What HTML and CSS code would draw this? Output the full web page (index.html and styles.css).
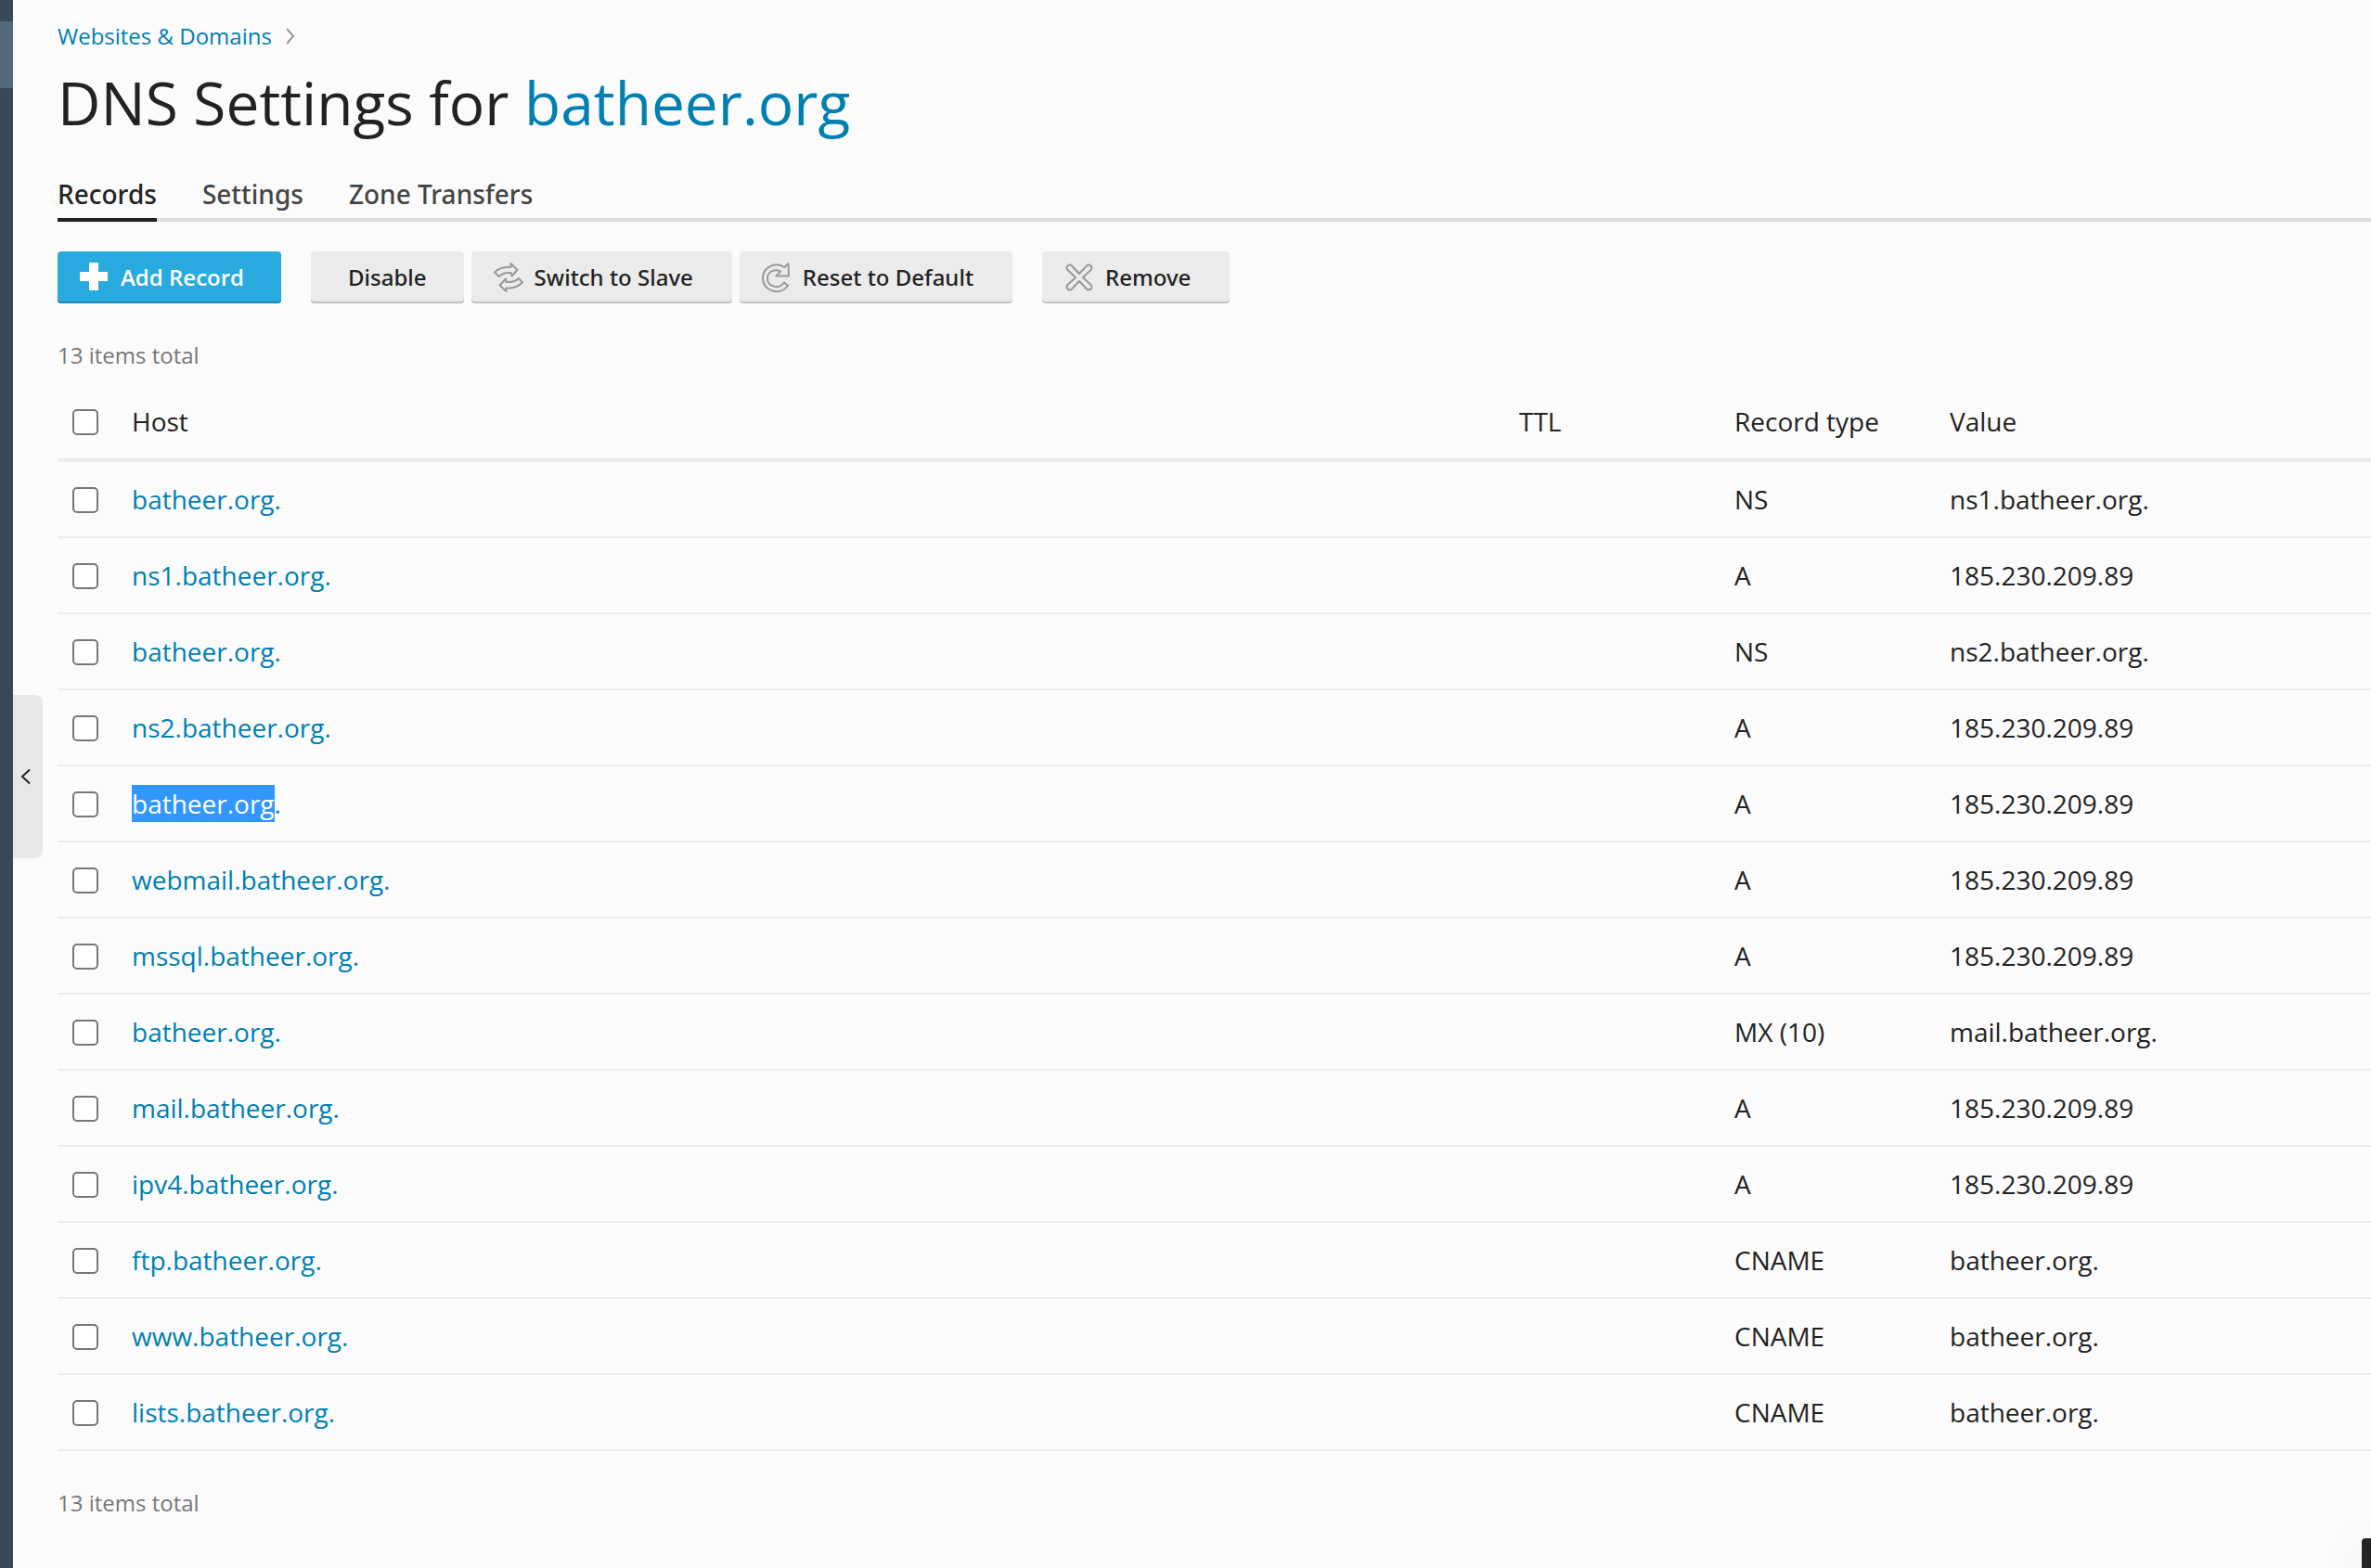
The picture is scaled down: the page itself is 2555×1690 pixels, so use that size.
FILE: index.html
```html
<!DOCTYPE html>
<html lang="en">
<head>
<meta charset="utf-8">
<title>DNS Settings for batheer.org</title>
<link rel="stylesheet" href="styles.css">
</head>
<body>
<div class="page">
  <aside class="sidebar"><div class="sidebar-active"></div></aside>
  <button class="sidebar-toggle" type="button" aria-label="Collapse sidebar">
    <svg width="12" height="18" viewBox="0 0 12 18" fill="none" stroke="#222" stroke-width="2"><path d="M10 1.500 2 9l8 7.500"/></svg>
  </button>
  <main class="content">
    <nav class="breadcrumb" aria-label="Breadcrumb">
      <a href="#">Websites &amp; Domains</a>
      <svg width="12" height="18" viewBox="0 0 12 18" fill="none" stroke="#999" stroke-width="2"><path d="M2 1l7 8-7 8"/></svg>
    </nav>
    <h1 class="title">DNS Settings for <a href="#">batheer.org</a></h1>
    <nav class="tabs" aria-label="Sections">
      <a class="tab tab-active" href="#">Records</a>
      <a class="tab" href="#">Settings</a>
      <a class="tab" href="#">Zone Transfers</a>
    </nav>
    <div class="toolbar">
      <div class="button-group">
        <button class="button button-primary" type="button">
          <svg class="icon" viewBox="0 0 32 32" fill="#fff"><path d="M10 0h10v10h10v10H20v10H10V20H0V10h10z"/></svg>
          Add Record
        </button>
      </div>
      <div class="button-group">
        <button class="button button-plain" type="button">Disable</button>
        <button class="button" type="button">
          <svg class="icon icon-line" viewBox="0 0 32 32"><path d="M1 10.500C5 6 11 4.500 18.500 5V1l7 7-6 6.500-1-3.500C13 10.500 9 11.500 5.500 15z"/><path d="M6.500 24.500 13 17.500l.5 3.500c5.500.5 10-.5 13.500-4l4 4.500c-4.500 4.500-10 6.500-17.500 6V31z"/></svg>
          Switch to Slave
        </button>
        <button class="button" type="button">
          <svg class="icon icon-line" viewBox="0 0 32 32"><path d="M28.500 1 29 14.500H15.500L20 9.500C13 6 6 10.500 6 17c0 9 12 12.500 18 4.500l4 3.500C19 36.500 1 30.500 1 17 1 5 14-1.500 24.500 5z"/></svg>
          Reset to Default
        </button>
      </div>
      <div class="button-group">
        <button class="button" type="button">
          <svg class="icon icon-line" viewBox="0 0 32 32"><path d="M8 3.500 16 12l8-8.500a2.800 2.800 0 0 1 4.500 4.500L20 16l8.500 8a2.800 2.800 0 0 1-4.500 4.500L16 20l-8 8.500A2.800 2.800 0 0 1 3.500 24L12 16 3.500 8A2.800 2.800 0 0 1 8 3.500z"/></svg>
          Remove
        </button>
      </div>
    </div>
    <p class="total">13 items total</p>
    <table class="records">
      <thead>
        <tr><th class="col-check"><input type="checkbox" aria-label="Select all"></th><th>Host</th><th class="col-ttl">TTL</th><th class="col-type">Record type</th><th class="col-value">Value</th></tr>
      </thead>
      <tbody>
        <tr><td class="col-check"><input type="checkbox" aria-label="Select NS batheer.org."></td><td><a href="#">batheer.org.</a></td><td></td><td>NS</td><td>ns1.batheer.org.</td></tr>
        <tr><td class="col-check"><input type="checkbox" aria-label="Select A ns1.batheer.org."></td><td><a href="#">ns1.batheer.org.</a></td><td></td><td>A</td><td>185.230.209.89</td></tr>
        <tr><td class="col-check"><input type="checkbox" aria-label="Select NS batheer.org."></td><td><a href="#">batheer.org.</a></td><td></td><td>NS</td><td>ns2.batheer.org.</td></tr>
        <tr><td class="col-check"><input type="checkbox" aria-label="Select A ns2.batheer.org."></td><td><a href="#">ns2.batheer.org.</a></td><td></td><td>A</td><td>185.230.209.89</td></tr>
        <tr><td class="col-check"><input type="checkbox" aria-label="Select A batheer.org."></td><td><a href="#"><span class="selected">batheer.org</span>.</a></td><td></td><td>A</td><td>185.230.209.89</td></tr>
        <tr><td class="col-check"><input type="checkbox" aria-label="Select A webmail.batheer.org."></td><td><a href="#">webmail.batheer.org.</a></td><td></td><td>A</td><td>185.230.209.89</td></tr>
        <tr><td class="col-check"><input type="checkbox" aria-label="Select A mssql.batheer.org."></td><td><a href="#">mssql.batheer.org.</a></td><td></td><td>A</td><td>185.230.209.89</td></tr>
        <tr><td class="col-check"><input type="checkbox" aria-label="Select MX batheer.org."></td><td><a href="#">batheer.org.</a></td><td></td><td>MX (10)</td><td>mail.batheer.org.</td></tr>
        <tr><td class="col-check"><input type="checkbox" aria-label="Select A mail.batheer.org."></td><td><a href="#">mail.batheer.org.</a></td><td></td><td>A</td><td>185.230.209.89</td></tr>
        <tr><td class="col-check"><input type="checkbox" aria-label="Select A ipv4.batheer.org."></td><td><a href="#">ipv4.batheer.org.</a></td><td></td><td>A</td><td>185.230.209.89</td></tr>
        <tr><td class="col-check"><input type="checkbox" aria-label="Select CNAME ftp.batheer.org."></td><td><a href="#">ftp.batheer.org.</a></td><td></td><td>CNAME</td><td>batheer.org.</td></tr>
        <tr><td class="col-check"><input type="checkbox" aria-label="Select CNAME www.batheer.org."></td><td><a href="#">www.batheer.org.</a></td><td></td><td>CNAME</td><td>batheer.org.</td></tr>
        <tr><td class="col-check"><input type="checkbox" aria-label="Select CNAME lists.batheer.org."></td><td><a href="#">lists.batheer.org.</a></td><td></td><td>CNAME</td><td>batheer.org.</td></tr>
      </tbody>
    </table>
    <p class="total total-bottom">13 items total</p>
  </main>
  <div class="corner-panel"></div>
</div>
</body>
</html>
```
FILE: styles.css
```css
* { box-sizing: border-box; }

body {
  margin: 0;
  background: #fbfbfb;
  color: #222;
  font: 28px/40px "Open Sans", "Noto Sans", sans-serif;
}

a { color: #007fb1; text-decoration: none; }

.page {
  position: relative;
  display: flex;
  min-height: 100vh;
}

.sidebar {
  flex: none;
  width: 14px;
  padding-top: 23px;
  background: #394858;
}

.sidebar-active { height: 72px; background: #54697c; }

.sidebar-toggle {
  position: absolute;
  left: 14px;
  top: calc(50% - 96px);
  display: flex;
  align-items: center;
  justify-content: center;
  width: 32px;
  height: 176px;
  padding: 0 4px 0 0;
  border: 0;
  border-radius: 0 8px 8px 0;
  background: #e7e7e7;
}

.content {
  flex: 1;
  min-width: 0;
  padding: 23px 0 32px 48px;
}

.breadcrumb {
  display: flex;
  align-items: center;
  gap: 14px;
  font-size: 24px;
  line-height: 32px;
}

.title {
  margin: 16px 0 38px;
  font-size: 64px;
  font-weight: 400;
  line-height: 80px;
}

.tabs {
  display: flex;
  gap: 49px;
  border-bottom: 4px solid #ddd;
}

.tab {
  margin-bottom: -4px;
  padding-bottom: 6px;
  border-bottom: 4px solid transparent;
  color: #444;
  font-family: "Noto Sans", "Open Sans", sans-serif;
  font-weight: 500;
}

.tab-active { border-color: #222; color: #222; }

.toolbar { display: flex; gap: 32px; margin-top: 32px; }
.button-group { display: flex; gap: 8px; }

.button {
  display: flex;
  align-items: center;
  gap: 12px;
  height: 56px;
  padding: 0 42px 0 24px;
  border: 0;
  border-radius: 4px;
  background: #ebebeb;
  box-shadow: inset 0 -2px #c1c1c1;
  color: #222;
  font: 500 24px/32px "Noto Sans", "Open Sans", sans-serif;
  white-space: nowrap;
}

.button-plain { padding: 0 40px; }

.button-primary {
  padding-right: 40px;
  background: #28aade;
  box-shadow: inset 0 -2px #2089b3;
  color: #fff;
  font-family: "Open Sans", "Noto Sans", sans-serif;
  font-weight: 600;
}

.icon { flex: none; width: 32px; height: 32px; }
.icon-line { fill: none; stroke: #999; stroke-width: 2; stroke-linejoin: round; }

.total {
  margin: 40px 0 15px;
  color: #777;
  font-size: 24px;
  line-height: 32px;
}

.total-bottom { margin: 40px 0 0; }

.records {
  width: 100%;
  table-layout: fixed;
  border-collapse: separate;
  border-spacing: 0;
}

.records th,
.records td {
  padding: 20px 0;
  border-bottom: 2px solid #ebebeb;
  font-weight: 400;
  text-align: left;
}

.records th { border-bottom-width: 4px; }

.records .col-check { width: 80px; padding-left: 16px; }
.col-ttl, .col-type { width: 232px; }
.col-value { width: 454px; }

.records input {
  display: block;
  appearance: none;
  width: 28px;
  height: 28px;
  margin: 2px 0 0;
  border: 2px solid #777;
  border-radius: 5px;
  background: #fff;
}

.selected {
  display: inline-block;
  background: #3297fd;
  color: #fff;
}

.corner-panel {
  position: fixed;
  right: 0;
  bottom: 0;
  width: 10px;
  height: 32px;
  border-radius: 4px 0 0;
  background: #202427;
  box-shadow: 0 8px 40px rgba(0, 0, 0, .15);
}
```
